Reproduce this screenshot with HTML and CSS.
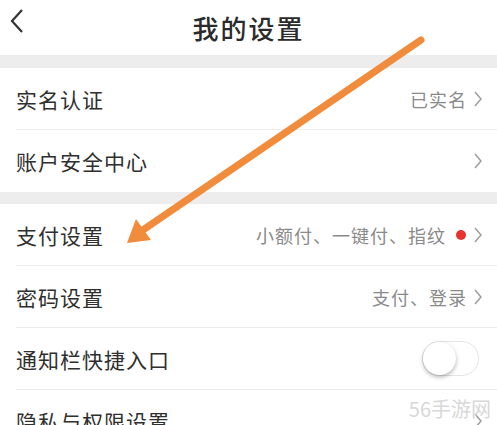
FILE: index.html
```html
<!DOCTYPE html>
<html lang="zh-CN">
<head>
  <meta charset="utf-8">
  <title>我的设置</title>
  <link rel="stylesheet" href="styles.css">
</head>
<body>
  <div class="page">
    <div class="header">
      <svg class="back" width="14" height="26" viewBox="0 0 14 26">
        <path d="M12 2 L2 13 L12 24" fill="none" stroke="#333" stroke-width="2.2"/>
      </svg>
      <h1>我的设置</h1>
    </div>

    <div class="gap top"></div>
    <div class="group">
      <div class="row">
        <span class="label">实名认证</span>
        <span class="value">已实名<svg class="arrow" width="8" height="16" viewBox="0 0 8 16"><path d="M1 1 L7 8 L1 15" fill="none" stroke="#9a9a9a" stroke-width="1.4"/></svg></span>
      </div>
      <div class="row last">
        <span class="label">账户安全中心</span>
        <span class="value"><svg class="arrow" width="8" height="16" viewBox="0 0 8 16"><path d="M1 1 L7 8 L1 15" fill="none" stroke="#9a9a9a" stroke-width="1.4"/></svg></span>
      </div>
    </div>

    <div class="gap"></div>
    <div class="group">
      <div class="row">
        <span class="label">支付设置</span>
        <span class="value">小额付、一键付、指纹<b class="dot"></b><svg class="arrow" width="8" height="16" viewBox="0 0 8 16"><path d="M1 1 L7 8 L1 15" fill="none" stroke="#9a9a9a" stroke-width="1.4"/></svg></span>
      </div>
      <div class="row">
        <span class="label">密码设置</span>
        <span class="value">支付、登录<svg class="arrow" width="8" height="16" viewBox="0 0 8 16"><path d="M1 1 L7 8 L1 15" fill="none" stroke="#9a9a9a" stroke-width="1.4"/></svg></span>
      </div>
      <div class="row">
        <span class="label">通知栏快捷入口</span>
        <span class="switch"><span class="knob"></span></span>
      </div>
      <div class="row last">
        <span class="label">隐私与权限设置</span>
        <span class="value"><svg class="arrow" width="8" height="16" viewBox="0 0 8 16"><path d="M1 1 L7 8 L1 15" fill="none" stroke="#9a9a9a" stroke-width="1.4"/></svg></span>
      </div>
    </div>

    <div class="watermark">56手游网</div>

    <svg class="pointer" width="497" height="425" viewBox="0 0 497 425">
      <line x1="421" y1="40" x2="140" y2="232" stroke="#f18c3c" stroke-width="7" stroke-linecap="round"/>
      <polygon points="127,243 136,219 151,240" fill="#f18c3c"/>
    </svg>
  </div>
</body>
</html>
```

FILE: styles.css
```css
html, body {
  margin: 0;
  padding: 0;
  background: #fff;
}
.page {
  position: relative;
  width: 497px;
  height: 425px;
  overflow: hidden;
  font-family: "Noto Sans CJK SC", sans-serif;
  color: #333;
}
.header {
  height: 55px;
  display: flex;
  align-items: center;
  justify-content: center;
  position: relative;
}
.header h1 {
  margin: 0;
  font-size: 26px;
  font-weight: 500;
  letter-spacing: 2px;
  color: #2b2b2b;
}
.back {
  position: absolute;
  left: 10px;
  top: 8px;
}
.gap {
  height: 12px;
  background: #ededed;
}
.gap.top {
  height: 13px;
}
.group {
  background: #fff;
}
.row {
  margin-left: 16px;
  height: 61px;
  border-bottom: 1px solid #ececec;
  display: flex;
  align-items: center;
  justify-content: space-between;
  padding-right: 15px;
}
.row.last {
  border-bottom: none;
  height: 62px;
}
.label {
  font-size: 21px;
  letter-spacing: 1px;
  color: #2f2f2f;
}
.value {
  display: flex;
  align-items: center;
  font-size: 18px;
  letter-spacing: 1px;
  color: #8a8a8a;
}
.arrow {
  display: block;
  margin-left: 7px;
}
.dot {
  display: inline-block;
  width: 10px;
  height: 10px;
  border-radius: 50%;
  background: #e8322e;
  margin-left: 10px;
  margin-right: 1px;
}
.switch {
  width: 55px;
  height: 33px;
  border: 1px solid #e4e4e4;
  border-radius: 18px;
  display: flex;
  align-items: center;
  margin-right: 3px;
}
.knob {
  width: 33px;
  height: 33px;
  border-radius: 50%;
  background: #fff;
  box-shadow: 0 2px 4px rgba(0, 0, 0, 0.3);
}
.watermark {
  position: absolute;
  right: 6px;
  top: 394px;
  font-size: 20px;
  color: #d8d8d8;
}
.pointer {
  position: absolute;
  left: 0;
  top: 0;
}
```
